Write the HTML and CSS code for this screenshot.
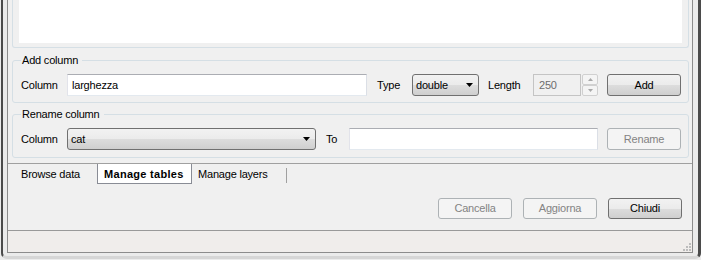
FILE: index.html
```html
<!DOCTYPE html>
<html lang="it">
<head>
  <meta charset="UTF-8">
  <title>Manage tables</title>
  <link rel="stylesheet" href="styles.css">
</head>
<body>
  <div class="frame">
    <div class="dialog">
      <div class="pane">
        <div class="group upper">
          <div class="list"></div>
        </div>

        <fieldset class="group add">
          <legend>Add column</legend>
          <div class="row">
            <span class="label col">Column</span>
            <div class="edit name">larghezza</div>
            <span class="label type">Type</span>
            <div class="combo type-combo">
              <span>double</span>
              <svg class="arrow" width="7" height="4" viewBox="0 0 7 4"><path d="M0 0h7L3.5 4z" fill="#000"/></svg>
            </div>
            <span class="label length">Length</span>
            <div class="spin-field">250</div>
            <div class="spin-buttons">
              <div class="spin-btn"><svg width="5" height="3" viewBox="0 0 5 3"><path d="M0 3h5L2.5 0z" fill="#a8a8a8"/></svg></div>
              <div class="spin-btn"><svg width="5" height="3" viewBox="0 0 5 3"><path d="M0 0h5L2.5 3z" fill="#a8a8a8"/></svg></div>
            </div>
            <div class="btn row-btn">Add</div>
          </div>
        </fieldset>

        <fieldset class="group rename">
          <legend>Rename column</legend>
          <div class="row">
            <span class="label col">Column</span>
            <div class="combo cat-combo">
              <span>cat</span>
              <svg class="arrow" width="7" height="4" viewBox="0 0 7 4"><path d="M0 0h7L3.5 4z" fill="#000"/></svg>
            </div>
            <span class="label to">To</span>
            <div class="edit target"></div>
            <div class="btn row-btn disabled">Rename</div>
          </div>
        </fieldset>
      </div>

      <div class="tabbar">
        <div class="tab first">Browse data</div>
        <div class="tab selected">Manage tables</div>
        <div class="tab">Manage layers</div>
        <span class="tab-end"></span>
      </div>

      <div class="buttons">
        <div class="btn disabled">Cancella</div>
        <div class="btn disabled">Aggiorna</div>
        <div class="btn">Chiudi</div>
      </div>

      <div class="statusbar">
        <svg class="grip" width="8" height="8" viewBox="0 0 8 8">
          <rect x="6" y="0" width="2" height="2" fill="#bcbcbc"/>
          <rect x="3" y="3" width="2" height="2" fill="#bcbcbc"/>
          <rect x="6" y="3" width="2" height="2" fill="#bcbcbc"/>
          <rect x="0" y="6" width="2" height="2" fill="#bcbcbc"/>
          <rect x="3" y="6" width="2" height="2" fill="#bcbcbc"/>
          <rect x="6" y="6" width="2" height="2" fill="#bcbcbc"/>
        </svg>
      </div>
    </div>
  </div>
</body>
</html>
```

FILE: styles.css
```css
body {
  margin: 0;
  width: 701px;
  height: 260px;
  overflow: hidden;
  background: #ececec;
  font-family: "Liberation Sans", Arial, sans-serif;
  font-size: 11px;
  letter-spacing: -0.2px;
  color: #000;
}
.frame {
  box-sizing: border-box;
  width: 700px;
  margin-left: 1px;
  border-left: 2px solid #4b4b4b;
  border-right: 3px solid #4b4b4b;
  border-bottom: 3px solid #d6d6d6;
  border-bottom-left-radius: 6px;
  border-bottom-right-radius: 6px;
  padding: 0 5px 3px 4px;
  background: #ebebeb;
}
.dialog {
  box-sizing: border-box;
  height: 253px;
  border: 1px solid #8c8c8c;
  border-top: 0;
  background: #f0f0f0;
  display: flex;
  flex-direction: column;
}
.pane {
  box-sizing: border-box;
  height: 164px;
  flex-shrink: 0;
  border-bottom: 1px solid #a0a0a0;
  overflow: hidden;
}
.group {
  border: 1px solid #d5dfe5;
  border-radius: 3px;
  margin: 0 3px 0 4px;
}
.upper {
  box-sizing: border-box;
  height: 48px;
  border-top: 0;
  border-radius: 0 0 3px 3px;
  padding: 0 6px 4px 6px;
}
.list {
  height: 43px;
  background: #fff;
}
fieldset.group {
  display: block;
  min-width: 0;
  margin-top: 6px;
  padding: 7px 6px 6px 8px;
}
fieldset.rename {
  margin-top: 5px;
  padding-bottom: 7px;
}
legend {
  padding: 0 4px 0 1px;
  line-height: 13px;
}
.row {
  display: flex;
  align-items: center;
  height: 22px;
}
.row > * {
  flex-shrink: 0;
}
.label {
  line-height: 20px;
}
.col { width: 46px; }
.type { width: 35px; margin-left: 10px; }
.length { width: 45px; margin-left: 9px; }
.to { width: 23px; margin-left: 10px; }
.edit {
  box-sizing: border-box;
  height: 22px;
  line-height: 20px;
  padding-left: 4px;
  background: #fff;
  border: 1px solid;
  border-color: #abadb3 #dbdfe6 #e3e9ef #e2e3ea;
}
.name { width: 300px; }
.target { width: 249px; }
.combo {
  box-sizing: border-box;
  height: 22px;
  display: flex;
  align-items: center;
  justify-content: space-between;
  padding: 0 5px 0 3px;
  border: 1px solid #707070;
  border-radius: 3px;
  background: linear-gradient(#f2f2f2, #ebebeb 50%, #dddddd 50%, #cfcfcf);
}
.type-combo { width: 67px; }
.cat-combo { width: 249px; }
.arrow {
  display: block;
}
.spin-field {
  box-sizing: border-box;
  width: 48px;
  height: 22px;
  line-height: 20px;
  padding-left: 5px;
  color: #6d6d6d;
  background: #f0f0f0;
  border: 1px solid #c4c4c4;
}
.spin-buttons {
  display: flex;
  flex-direction: column;
  margin-left: 1px;
}
.spin-btn {
  box-sizing: border-box;
  width: 16px;
  height: 11px;
  display: flex;
  align-items: center;
  justify-content: center;
  border: 1px solid #d0d0d0;
  border-radius: 2px;
  background: #f4f4f4;
}
.spin-btn svg {
  display: block;
}
.btn {
  box-sizing: border-box;
  width: 74px;
  height: 21px;
  line-height: 19px;
  text-align: center;
  border: 1px solid #707070;
  border-radius: 3px;
  background: linear-gradient(#f2f2f2, #ebebeb 50%, #dddddd 50%, #cfcfcf);
}
.row-btn {
  height: 22px;
  line-height: 20px;
  margin-left: 9px;
}
.btn.disabled {
  color: #838383;
  border-color: #adb2b5;
  background: #f4f4f4;
}
.tabbar {
  height: 20px;
  flex-shrink: 0;
  display: flex;
  align-items: flex-start;
  padding-left: 5px;
}
.tab {
  box-sizing: border-box;
  height: 20px;
  line-height: 18px;
  padding: 1px 0 0 6px;
  width: 94px;
}
.tab.first {
  width: 84px;
  padding-left: 8px;
}
.tab.selected {
  width: 95px;
  background: #fff;
  border: 1px solid #898c95;
  border-top: 0;
  padding-left: 6px;
  font-weight: bold;
  letter-spacing: 0.3px;
}
.tab-end {
  width: 1px;
  height: 15px;
  margin-top: 4px;
  background: #a0a0a0;
}
.buttons {
  height: 46px;
  flex-shrink: 0;
  box-sizing: border-box;
  display: flex;
  justify-content: flex-end;
  gap: 11px;
  padding: 14px 10px 0 0;
}
.statusbar {
  flex: 1;
  border-top: 1px solid #999;
  background: #f0edeb;
  display: flex;
  justify-content: flex-end;
  align-items: flex-end;
  padding: 0 1px 1px 0;
}
.grip {
  display: block;
}
```
